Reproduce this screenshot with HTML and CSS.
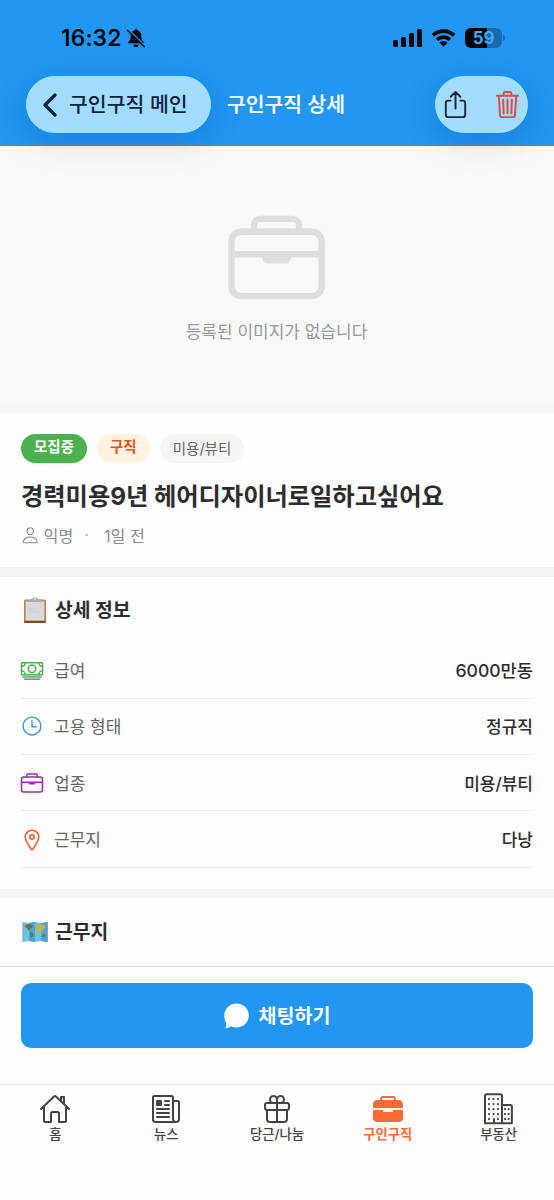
FILE: index.html
```
<!DOCTYPE html>
<html lang="ko">
<head>
<meta charset="utf-8">
<title>구인구직 상세</title>
<link rel="stylesheet" href="styles.css">
</head>
<body>
<svg class="defs" width="0" height="0" aria-hidden="true">
  <symbol id="briefcase" viewBox="0 0 512 512"><rect x="32" y="128" width="448" height="320" rx="48"/><path d="M144 128V96a32 32 0 0 1 32-32h160a32 32 0 0 1 32 32v32M480 240H32"/><path d="M184 244h144l-8 18q-4 18-18 18h-92q-14 0-18-18z" fill="currentColor" stroke-width="12"/></symbol>
</svg>
<div class="phone">
  <header class="top">
    <div class="status">
      <span class="time">16:32</span>
      <svg class="bell" viewBox="0 0 20 20"><path d="M10 1.200c.9 0 1.500.6 1.600 1.400 2.400.7 3.700 2.600 3.700 5.100 0 3.800.9 4.700 2 5.800.9.9.4 1.800-.6 1.800H3.300c-1 0-1.500-.9-.6-1.800 1.100-1.100 2-2 2-5.800 0-2.500 1.300-4.400 3.700-5.100C8.500 1.800 9.100 1.200 10 1.200z"/><path d="M7.400 16.500h5.200a2.600 2.600 0 0 1-5.200 0z"/><path class="gap" d="M2.200 1.200 19.200 17.800"/><path class="slash" d="M1.300 2.200 18.300 18.800"/></svg>
      <div class="status-icons">
        <svg class="signal" viewBox="0 0 29 18"><rect y="11" width="5" height="7" rx="1.500"/><rect x="8" y="8" width="5" height="10" rx="1.500"/><rect x="16" y="4" width="5" height="14" rx="1.500"/><rect x="24" y="0" width="5" height="18" rx="1.500"/></svg>
        <svg class="wifi" viewBox="0 0 26 18"><path d="M2 6.300a15.800 15.800 0 0 1 22 0M6.300 10.700a9.700 9.700 0 0 1 13.400 0"/><path class="dot" d="M13 18l-4.200-4.200a6 6 0 0 1 8.400 0z"/></svg>
        <div class="battery">59</div>
      </div>
    </div>
    <div class="bar">
      <div class="pill back"><svg viewBox="0 0 14 24"><path d="M12 2 2 12l10 10"/></svg><span>구인구직 메인</span></div>
      <h1>구인구직 상세</h1>
      <div class="pill actions">
        <svg class="ico share" viewBox="0 0 512 512"><path d="M336 192h40a40 40 0 0 1 40 40v192a40 40 0 0 1-40 40H136a40 40 0 0 1-40-40V232a40 40 0 0 1 40-40h40M336 128l-80-80-80 80M256 321V48"/></svg>
        <svg class="ico trash" viewBox="0 0 512 512"><path d="m112 112 20 320c.95 18.490 14.400 32 32 32h184c17.670 0 30.870-13.510 32-32l20-320M80 112h352M192 112V72a24 24 0 0 1 24-24h80a24 24 0 0 1 24 24v40M256 176v224M184 176l8 224M328 176l-8 224"/></svg>
      </div>
    </div>
  </header>

  <section class="empty">
    <svg class="ico"><use href="#briefcase"/></svg>
    <p>등록된 이미지가 없습니다</p>
  </section>

  <section class="summary">
    <div class="tags"><span class="tag open">모집중</span><span class="tag seek">구직</span><span class="tag kind">미용/뷰티</span></div>
    <h2>경력미용9년 헤어디자이너로일하고싶어요</h2>
    <div class="meta">
      <svg class="ico" viewBox="0 0 512 512"><path d="M344 144c-3.920 52.870-44 96-88 96s-84.150-43.120-88-96c-4-55 35-96 88-96s92 42 88 96zM256 304c-87 0-175.300 48-191.640 138.600C62.390 453.520 68.570 464 80 464h352c11.440 0 17.620-10.480 15.650-21.400C431.300 352 343 304 256 304z"/></svg>
      <span>익명</span><span class="sep">·</span><span>1일 전</span>
    </div>
  </section>

  <section class="details">
    <h3>
      <svg class="clip" viewBox="0 0 24 26"><rect x="1" y="2.500" width="22" height="23" rx="1.500" fill="#b7824f"/><path d="M1 24h22v.5a1.500 1.500 0 0 1-1.500 1.500h-19A1.500 1.500 0 0 1 1 24.500z" fill="#754a2b"/><rect x="2.600" y="4" width="18.800" height="19.500" fill="#dadada"/><path d="M6 11h12M6 13h9M6 15h11" stroke="#cbcccd" stroke-width=".8"/><path d="M3.500 5V3.500L9 2.300C9.500-.2 14.500-.2 15 2.300l5.500 1.200V5z" fill="#a9abad"/><circle cx="12" cy="2" r="1" fill="#eee"/></svg>
      <span>상세 정보</span>
    </h3>
    <div class="row"><svg class="ico green" viewBox="0 0 512 512"><rect x="32" y="80" width="448" height="256" rx="16"/><path d="M64 384h384M96 432h320M480 160a80 80 0 0 1-80-80M32 160a80 80 0 0 0 80-80M480 256a80 80 0 0 0-80 80M32 256a80 80 0 0 1 80 80"/><circle cx="256" cy="208" r="80"/></svg><span>급여</span><b class="pay">6000만동</b></div>
    <div class="row"><svg class="ico blue" viewBox="0 0 512 512"><circle cx="256" cy="256" r="208"/><path d="M256 128v144h96"/></svg><span>고용 형태</span><b>정규직</b></div>
    <div class="row"><svg class="ico purple"><use href="#briefcase"/></svg><span>업종</span><b>미용/뷰티</b></div>
    <div class="row"><svg class="ico red" viewBox="0 0 512 512"><path d="M256 48c-79.500 0-144 61.390-144 137 0 87 96 224.870 131.250 272.490a15.770 15.770 0 0 0 25.500 0C304 409.890 400 272.070 400 185c0-75.610-64.500-137-144-137z"/><circle cx="256" cy="192" r="48"/></svg><span>근무지</span><b>다낭</b></div>
  </section>

  <section class="place">
    <h3>
      <svg class="map" viewBox="0 0 26 22"><path d="M.5 1 7 2l6-1 6 1 6.500-1v20L19 20l-6 1-6-1-6.500 1z" fill="#6cc0ee"/><path d="M7 2l6-1v20l-6-1zM19 2l6.500-1v20L19 20z" fill="#4aa5d8"/><path d="M3 4l4-1 4 1.500-1 2.500-2 1-1 2-2-3-2-1zM8 11l3 1 .5 2-2 4-1-3z" fill="#557f42"/><path d="M13 6l3-2.500 7 .5.5 3-2.500 1.500-1 2.500-2-2.500-2 1zM14 9l3-.5 1 2-1.500 4-2-2.500z" fill="#b9b848"/><path d="M20 14l3-1 .5 2.500-2.500 1z" fill="#687f3c"/><path d="M1 21V1" stroke="#a6a498" stroke-width=".8"/><path d="M25 21V1" stroke="#878a83" stroke-width=".8"/></svg>
      <span>근무지</span>
    </h3>
  </section>

  <div class="cta">
    <div class="button"><svg viewBox="0 0 25 26"><path d="M12.600.5C19.400.5 24.800 5.800 24.800 12.500S19.400 24.500 12.600 24.500c-2 0-3.800-.4-5.400-1.200-1.300.8-3 1.700-4.700 2-.8.1-1.200-.4-.9-1.100.5-1.200.7-2.800.5-4C.9 17.800.3 15.200.3 12.500.3 5.800 5.800.5 12.600.5z"/></svg><span>채팅하기</span></div>
  </div>

  <nav class="tabs">
    <div class="tab"><svg class="ico" viewBox="0 0 512 512"><path d="M80 212v236a16 16 0 0 0 16 16h96V328a24 24 0 0 1 24-24h80a24 24 0 0 1 24 24v136h96a16 16 0 0 0 16-16V212M480 256 266.890 52c-5-5.280-16.690-5.340-21.780 0L32 256M400 179V64h-48v69"/></svg><span>홈</span></div>
    <div class="tab"><svg class="ico" viewBox="0 0 512 512"><path d="M368 415.860V72a24 24 0 0 0-24-24H72a24 24 0 0 0-24 24v352a40 40 0 0 0 40 40h328M416 464a48 48 0 0 1-48-48V128h72a24 24 0 0 1 24 24v264a48 48 0 0 1-48 48zM240 128h64M240 192h64M112 256h192M112 320h192M112 384h192"/><path class="solid" d="M112 128h64v64h-64z"/></svg><span>뉴스</span></div>
    <div class="tab"><svg class="ico" viewBox="0 0 512 512"><path d="M256 104v56h56a56 56 0 1 0-56-56zM256 104v56h-56a56 56 0 1 1 56-56zM416 272v144a48 48 0 0 1-48 48H144a48 48 0 0 1-48-48V272M256 160v304"/><rect x="64" y="160" width="384" height="112" rx="32"/></svg><span>당근/나눔</span></div>
    <div class="tab active"><svg class="fill" viewBox="0 0 512 512"><path d="M336 288c0 8.800-7.200 16-16 16H192c-8.800 0-16-7.200-16-16v-12a4 4 0 0 0-4-4H20a4 4 0 0 0-4 4v124c0 35.300 28.700 64 64 64h352c35.300 0 64-28.700 64-64V276a4 4 0 0 0-4-4H340a4 4 0 0 0-4 4zM496 176c0-35.300-28.700-64-64-64h-48V96c0-26.500-21.500-48-48-48H176c-26.500 0-48 21.500-48 48v16H80c-35.300 0-64 28.700-64 64v60a4 4 0 0 0 4 4h472a4 4 0 0 0 4-4zm-144-64H160V96c0-8.800 7.200-16 16-16h160c8.800 0 16 7.200 16 16z"/></svg><span>구인구직</span></div>
    <div class="tab"><svg class="ico" viewBox="0 0 512 512"><path d="M176 484V416M304 192h134a24 24 0 0 1 24 24v268H32V48a28 28 0 0 1 28-28h216a28 28 0 0 1 28 28v436"/><path class="dots" d="M96 96h0M168 96h0M240 96h0M96 176h0M168 176h0M240 176h0M96 256h0M168 256h0M240 256h0M96 336h0M168 336h0M240 336h0M96 416h0M240 416h0M352 256h0M410 256h0M352 336h0M410 336h0M352 416h0M410 416h0"/></svg><span>부동산</span></div>
  </nav>
</div>
</body>
</html>
```
FILE: styles.css
```
* { box-sizing: border-box; }
body {
  margin: 0;
  background: #fefefe;
  color: #2c2c2e;
  font-family: Inter, "Noto Sans CJK KR", sans-serif;
}
h1, h2, h3, p { margin: 0; }
span, b, h1, h2, p { white-space: nowrap; }
svg { display: block; flex: none; }
.defs { position: absolute; }
.ico { fill: none; stroke: currentColor; stroke-width: 32; stroke-linecap: round; stroke-linejoin: round; }
.solid { fill: currentColor; }
.phone { width: 554px; height: 1200px; overflow: hidden; display: flex; flex-direction: column; }

.top { position: relative; z-index: 1; height: 146px; flex: none; background: #2196f3; }
.status { height: 76px; padding: 0 48px 1px 61px; display: flex; align-items: center; color: #000; }
.time { font-size: 23px; font-weight: 500; letter-spacing: .2px; -webkit-text-stroke: .2px #000; }
.bell { width: 20px; height: 20px; margin-left: 4px; }
.bell .gap { stroke: #2196f3; stroke-width: 1.400; }
.bell .slash { stroke: #000; stroke-width: 1.400; stroke-linecap: round; }
.status-icons { margin-left: auto; margin-right: 4px; display: flex; align-items: center; }
.signal { width: 29px; height: 18px; }
.wifi { width: 25px; height: 18px; margin-left: 9px; fill: none; stroke: #000; stroke-width: 3.800; }
.wifi .dot { fill: #000; stroke: none; }
.battery {
  position: relative;
  width: 37px; height: 20px; margin-left: 9px; border-radius: 6px;
  background: linear-gradient(90deg, #000 59%, #176aac 59%);
  color: #45a8f5; font-size: 17px; line-height: 20px; font-weight: 700; text-align: center; letter-spacing: -.3px;
}
.battery::after { content: ""; position: absolute; left: 38px; top: 7px; width: 2px; height: 6px; border-radius: 0 2px 2px 0; background: #176aac; }
.bar { display: flex; align-items: center; padding: 0 26px; height: 57px; }
.pill {
  height: 57px; border-radius: 29px; display: flex; align-items: center; flex: none;
  background: #a3dcff; border: 1.500px solid #8deaff; box-shadow: 0 8px 34px rgba(0, 10, 40, .15);
}
.back { width: 185px; padding-left: 16px; color: #0b2345; font-size: 20.500px; font-weight: 500; }
.back svg { width: 14px; height: 24px; margin-right: 12px; fill: none; stroke: #0b2345; stroke-width: 3.200; stroke-linecap: round; stroke-linejoin: round; }
.back span { padding-bottom: 3px; }
h1 { margin-left: 16px; padding-bottom: 3px; color: #fff; font-size: 20.400px; font-weight: 500; -webkit-text-stroke: .2px #fff; }
.actions { width: 93px; margin-left: auto; padding: 0 4px; justify-content: space-between; }
.actions svg { width: 31px; height: 31px; }
.share { color: #1d2a33; }
.trash { color: #e04a4c; }

.empty {
  height: 267px; flex: none; padding-top: 60px; display: flex; flex-direction: column; align-items: center;
  background: linear-gradient(#f9f9fa 258px, #f6f6f6 258px); color: #dedede;
}
.empty svg { width: 103px; height: 103px; margin-right: 1px; }
.empty p { margin: 10px 1px 0 0; font-size: 17px; line-height: 26px; color: #989898; }

.summary { height: 154px; flex: none; padding: 21px 21px 0; }
.tags { display: flex; gap: 10px; }
.tag { height: 29px; border-radius: 15px; padding: 0 13px; font-size: 14.500px; line-height: 26px; font-weight: 700; }
.open { background: #4caf50; color: #fff; }
.seek { background: #fff3e0; color: #e6531c; }
.kind { background: #f5f5f5; color: #666; font-weight: 400; line-height: 29px; }
h2 { margin-top: 15px; font-size: 24.300px; line-height: 36px; font-weight: 700; letter-spacing: -.05px; }
.meta { margin-top: 9px; height: 24px; display: flex; align-items: center; font-size: 16.200px; color: #8c8c8c; }
.meta svg { width: 18.500px; height: 18.500px; margin-right: 4px; }
.meta span { padding-bottom: 1px; }
.sep { margin: 0 15px 0 11px; color: #aaa; }

.details { height: 322px; flex: none; border-top: 10px solid #f4f4f4; padding: 14px 21px 0; }
h3 { display: flex; align-items: center; height: 38px; font-size: 19.300px; font-weight: 700; }
.details h3 span { padding-bottom: 2px; }
.clip { width: 24px; height: 26px; margin: 0 8px 0 2px; }
.map { width: 26px; height: 22px; margin: 1px 7px 0 1px; }
.details h3 { margin-bottom: 13.500px; }
.row { height: 56.300px; border-bottom: 1px solid #ebebeb; display: flex; align-items: center; font-size: 17px; color: #666; }
.row span, .row b { padding-bottom: 1px; }
.row svg { width: 24px; height: 24px; margin: 1px 10px 0 -1px; }
.row b { margin-left: auto; color: #2c2c2e; font-weight: 500; }
.row .pay { font-size: 17.600px; }
.green { color: #4caf50; }
.row .blue { width: 22px; height: 22px; margin: 0 11px 0 0; color: #3994de; }
.purple { color: #9c27b0; }
.red { color: #ee5a2e; }

.place { height: 78px; flex: none; border-top: 9px solid #f5f5f5; border-bottom: 1px solid #dedede; padding: 14px 21px 0; }
.cta { height: 117px; flex: none; padding: 16px 21px 0; }
.button { height: 65px; border-radius: 10px; background: #2196f3; display: flex; align-items: center; justify-content: center; gap: 10px; color: #fff; font-size: 19.500px; font-weight: 700; }
.button span { padding-bottom: 2px; }
.button svg { width: 25px; height: 26px; fill: #fff; }
.tabs { flex: 1; border-top: 1px solid #ececec; padding-top: 8px; display: grid; grid-template-columns: repeat(5, 1fr); align-items: start; }
.tab { display: flex; flex-direction: column; align-items: center; color: #444; font-size: 13.300px; line-height: 18px; font-weight: 500; }
.tab svg { width: 32px; height: 32px; }
.tab .fill { fill: currentColor; }
.dots { stroke-width: 36; }
.active { color: #ff6b35; font-weight: 700; }
```
